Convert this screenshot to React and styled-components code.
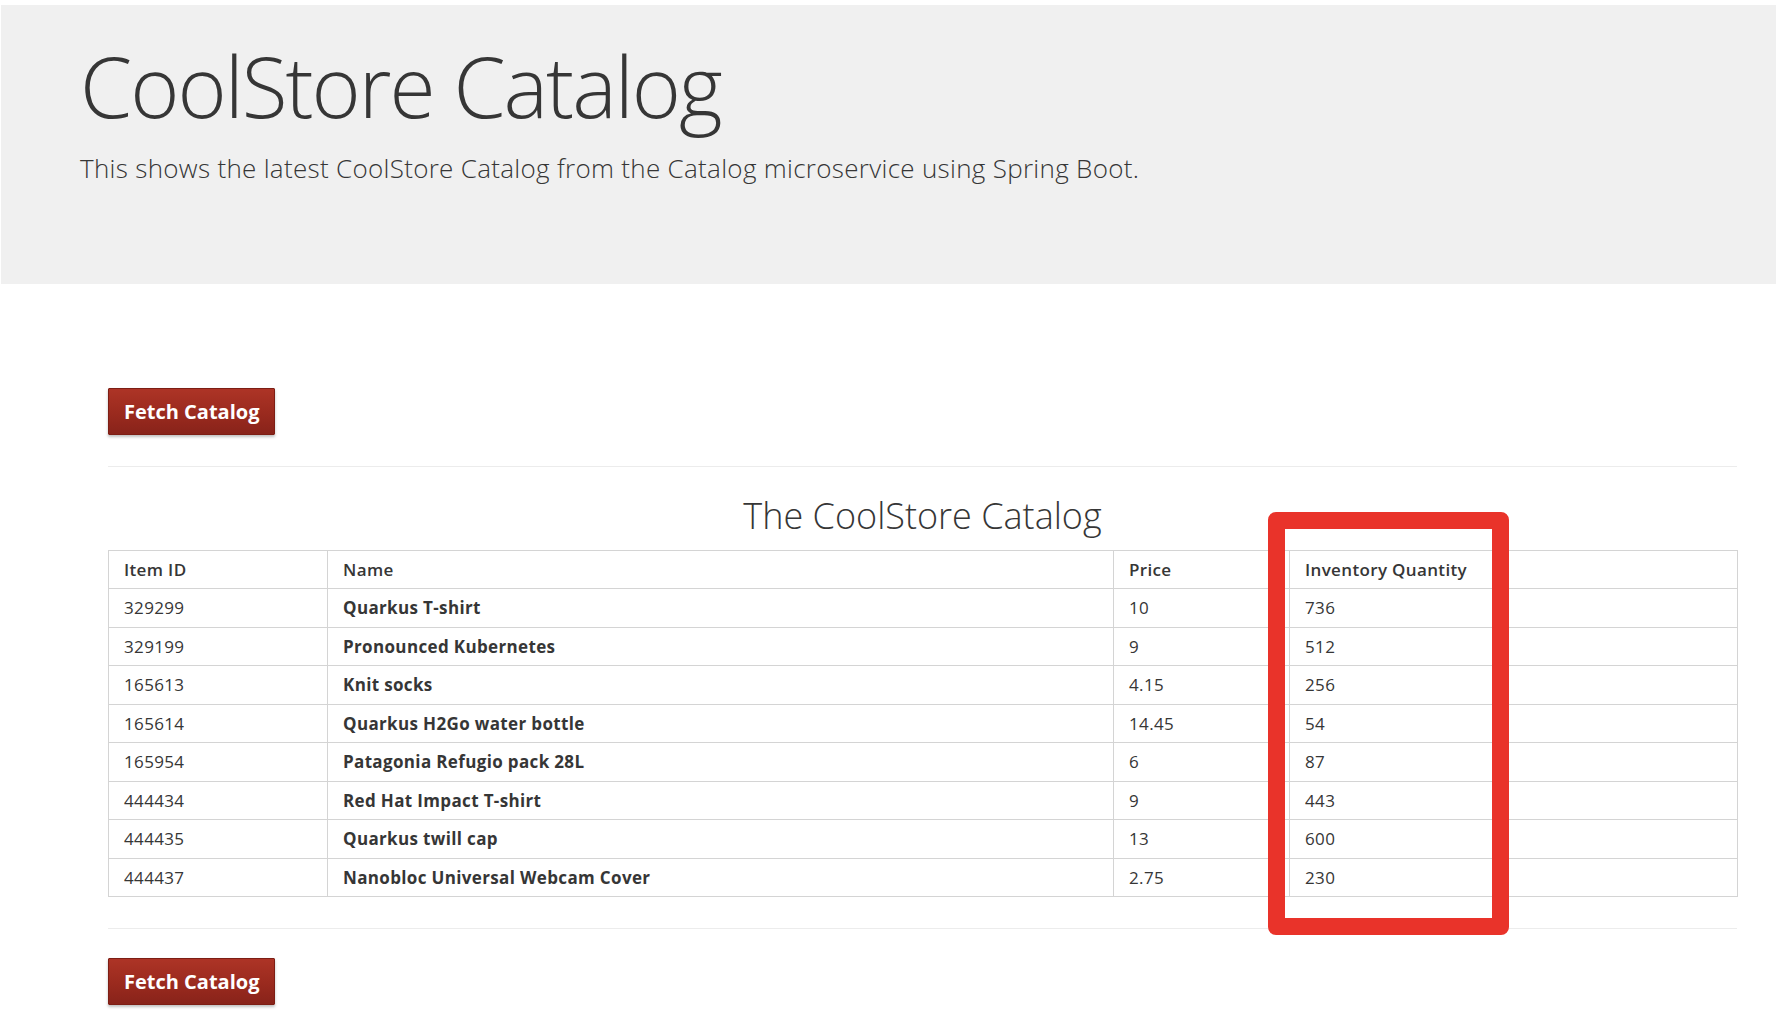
import React from "react";
import styled, { createGlobalStyle } from "styled-components";

const GlobalStyle = createGlobalStyle`
  html, body {
    margin: 0;
    padding: 0;
    background: #ffffff;
  }
  body {
    font-family: "Open Sans", "Noto Sans", "Liberation Sans", sans-serif;
    color: #363636;
  }
  * { box-sizing: border-box; }
`;

const Jumbotron = styled.header`
  margin: 5px 16px 0 1px;
  height: 279px;
  background: #f0f0f0;
  padding: 35px 0 0 79px;
`;

const Title = styled.h1`
  margin: 0;
  font-size: 84px;
  font-weight: 300;
  line-height: 1.1;
  color: #363636;
  letter-spacing: -2px;
`;

const Lead = styled.p`
  margin: 18px 0 0;
  font-size: 26px;
  font-weight: 300;
  line-height: 1.4;
  letter-spacing: 0.3px;
  color: #363636;
`;

const Container = styled.main`
  position: relative;
  width: 1629px;
  margin: 104px 0 0 108px;
  padding-bottom: 27px;
`;

const FetchButton = styled.button`
  display: inline-flex;
  align-items: center;
  justify-content: center;
  height: 47px;
  padding: 0 15px;
  border: 1px solid #7d1e14;
  border-radius: 1px;
  background: linear-gradient(to bottom, #ad3426 0%, #9a2a1e 55%, #88231a 100%);
  box-shadow: 0 2px 3px rgba(0, 0, 0, 0.25);
  color: #ffffff;
  font-family: "Open Sans", "Noto Sans", sans-serif;
  font-size: 20px;
  font-weight: 700;
  cursor: pointer;
`;

const Rule = styled.hr`
  margin: ${(p) => p.$top}px 0 ${(p) => p.$bottom}px;
  border: 0;
  border-top: 1px solid #ececec;
  height: 0;
`;

const TableTitle = styled.h2`
  margin: 0 0 14px;
  text-align: center;
  font-size: 36px;
  font-weight: 300;
  line-height: 1.1;
  color: #363636;
`;

const Table = styled.table`
  width: 1629px;
  table-layout: fixed;
  border-collapse: collapse;
  border: 1px solid #d4d4d4;
  font-size: 17px;
  letter-spacing: 0.35px;
`;

const Th = styled.th`
  text-align: left;
  font-weight: 600;
  padding: 8px 15px;
  line-height: 21.5px;
  border: 1px solid #d4d4d4;
  color: #363636;
`;

const Td = styled.td`
  padding: 8px 15px;
  line-height: 21.5px;
  border: 1px solid #d4d4d4;
  font-weight: ${(p) => (p.$bold ? 700 : 400)};
  color: #363636;
`;

const Highlight = styled.div`
  position: absolute;
  left: 1160px;
  top: 124px;
  width: 241px;
  height: 423px;
  border: 17px solid #e9332a;
  border-radius: 8px;
  pointer-events: none;
`;

const items = [
  ["329299", "Quarkus T-shirt", "10", "736"],
  ["329199", "Pronounced Kubernetes", "9", "512"],
  ["165613", "Knit socks", "4.15", "256"],
  ["165614", "Quarkus H2Go water bottle", "14.45", "54"],
  ["165954", "Patagonia Refugio pack 28L", "6", "87"],
  ["444434", "Red Hat Impact T-shirt", "9", "443"],
  ["444435", "Quarkus twill cap", "13", "600"],
  ["444437", "Nanobloc Universal Webcam Cover", "2.75", "230"],
];

export default function App() {
  return (
    <>
      <GlobalStyle />
      <Jumbotron>
        <Title>CoolStore Catalog</Title>
        <Lead>This shows the latest CoolStore Catalog from the Catalog microservice using Spring Boot.</Lead>
      </Jumbotron>
      <Container>
        <FetchButton>Fetch Catalog</FetchButton>
        <Rule $top={31} $bottom={29} />
        <TableTitle>The CoolStore Catalog</TableTitle>
        <Table>
          <colgroup>
            <col style={{ width: 219 }} />
            <col style={{ width: 786 }} />
            <col style={{ width: 176 }} />
            <col style={{ width: 448 }} />
          </colgroup>
          <thead>
            <tr>
              <Th>Item ID</Th>
              <Th>Name</Th>
              <Th>Price</Th>
              <Th>Inventory Quantity</Th>
            </tr>
          </thead>
          <tbody>
            {items.map(([id, name, price, qty]) => (
              <tr key={id}>
                <Td>{id}</Td>
                <Td $bold>{name}</Td>
                <Td>{price}</Td>
                <Td>{qty}</Td>
              </tr>
            ))}
          </tbody>
        </Table>
        <Rule $top={31} $bottom={29} />
        <FetchButton>Fetch Catalog</FetchButton>
        <Highlight />
      </Container>
    </>
  );
}
